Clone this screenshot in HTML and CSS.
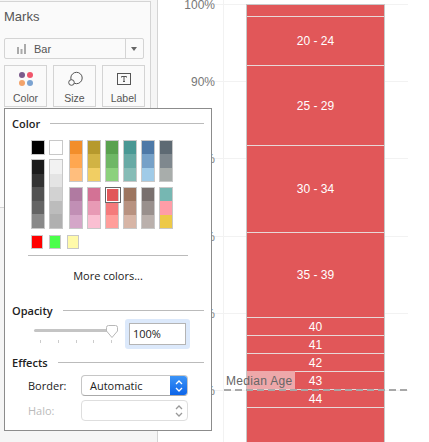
FILE: index.html
```html
<!DOCTYPE html>
<html lang="en">
<head>
    <meta charset="UTF-8">
    <title>Marks</title>
    <link rel="stylesheet" href="styles.css">
</head>
<body>

<div class="sidebar">
    <div class="marks">
        <div class="marks-title">Marks</div>
        <div class="mark-type">
            <svg class="bar-icon" width="10" height="10" viewBox="0 0 10 10"><path d="M1 3h2v7H1zM4.5 5h2v5h-2zM8 0h2v10H8z" fill="#aaa"/></svg>
            <span class="mark-name">Bar</span>
            <span class="mark-arrow"></span>
        </div>
        <div class="mark-buttons">
            <div class="mark-btn">
                <svg width="16" height="16" viewBox="0 0 16 16"><circle cx="4" cy="4" r="3" fill="#7b5b8c"/><circle cx="12" cy="4" r="3" fill="#f0566b"/><circle cx="4" cy="12" r="3" fill="#f2a36b"/><circle cx="12" cy="12" r="3" fill="#7ba3d1"/></svg>
                <span>Color</span>
            </div>
            <div class="mark-btn">
                <svg width="16" height="16" viewBox="0 0 16 16"><circle cx="9.5" cy="7" r="5.7" fill="none" stroke="#555"/><circle cx="4.5" cy="11.5" r="2.8" fill="#fafafa" stroke="#555"/></svg>
                <span>Size</span>
            </div>
            <div class="mark-btn">
                <svg width="14" height="16" viewBox="0 0 14 16"><rect x="0.5" y="2.5" width="13" height="11" fill="none" stroke="#555"/><path d="M4.5 6.5v-1h5v1M7 5.5v5M6 10.5h2" fill="none" stroke="#555"/></svg>
                <span>Label</span>
            </div>
        </div>
    </div>
</div>

<div class="chart">
    <div class="grid-line g100"></div>
    <div class="grid-line g90"></div>
    <div class="grid-line g80"></div>
    <div class="grid-line g70"></div>
    <div class="grid-line g60"></div>
    <div class="grid-line g50"></div>
    <div class="axis-line"></div>

    <div class="tick g100">100%</div>
    <div class="tick g90">90%</div>
    <div class="tick g80">80%</div>
    <div class="tick g70">70%</div>
    <div class="tick g60">60%</div>
    <div class="tick g50">50%</div>

    <div class="bar">
        <div class="seg s-top"></div>
        <div class="seg s-49">20 - 24</div>
        <div class="seg s-80">25 - 29</div>
        <div class="seg s-87">30 - 34</div>
        <div class="seg s-85">35 - 39</div>
        <div class="seg s-18">40</div>
        <div class="seg s-18">41</div>
        <div class="seg s-18">42</div>
        <div class="seg s-18">43</div>
        <div class="seg s-18">44</div>
        <div class="seg s-rest"></div>
    </div>

    <div class="median-box"></div>
    <div class="median-label">Median Age</div>
    <div class="median-line"></div>
</div>

<div class="popover">
    <div class="section-head"><span>Color</span></div>

    <div class="palette">
        <div class="palette-left">
            <div class="pair">
                <div class="swatch" style="background:#000"></div>
                <div class="swatch" style="background:#fff"></div>
            </div>
            <div class="pair">
                <div class="ramp r5">
                    <i style="background:#1b1b1b"></i><i style="background:#333"></i><i style="background:#525252"></i><i style="background:#646464"></i><i style="background:#898989"></i>
                </div>
                <div class="ramp r5">
                    <i style="background:#f2f2f2"></i><i style="background:#e4e4e4"></i><i style="background:#d2d2d2"></i><i style="background:#bcbcbc"></i><i style="background:#b0b0b0"></i>
                </div>
            </div>
        </div>
        <div class="palette-right">
            <div class="ramp r3"><i style="background:#f28e2b"></i><i style="background:#ffa750"></i><i style="background:#ffbe7d"></i></div>
            <div class="ramp r3"><i style="background:#b6992d"></i><i style="background:#d1b344"></i><i style="background:#f1ce63"></i></div>
            <div class="ramp r3"><i style="background:#59a14f"></i><i style="background:#6fb766"></i><i style="background:#8cd17d"></i></div>
            <div class="ramp r3"><i style="background:#499894"></i><i style="background:#68aaa5"></i><i style="background:#86bcb6"></i></div>
            <div class="ramp r3"><i style="background:#4e79a7"></i><i style="background:#76a1c8"></i><i style="background:#a0cbe8"></i></div>
            <div class="ramp r3"><i style="background:#5e6a73"></i><i style="background:#7f888e"></i><i style="background:#a8adab"></i></div>

            <div class="ramp r3"><i style="background:#b07aa1"></i><i style="background:#c18fb5"></i><i style="background:#d4a6c8"></i></div>
            <div class="ramp r3"><i style="background:#d37295"></i><i style="background:#e89ab5"></i><i style="background:#fabfd2"></i></div>
            <div class="ramp r3 picked"><i style="background:#e15759"></i><i style="background:#f47a7b"></i><i style="background:#ff9d9a"></i></div>
            <div class="ramp r3"><i style="background:#9d7660"></i><i style="background:#b89280"></i><i style="background:#d7b5a6"></i></div>
            <div class="ramp r3"><i style="background:#79706e"></i><i style="background:#99908d"></i><i style="background:#bab0ac"></i></div>
            <div class="ramp r3"><i style="background:#76b7b2"></i><i style="background:#ff9da7"></i><i style="background:#edc948"></i></div>
        </div>
    </div>

    <div class="recent">
        <div class="swatch small" style="background:#ff0000"></div>
        <div class="swatch small" style="background:#4bff4b"></div>
        <div class="swatch small" style="background:#fffaaa"></div>
    </div>

    <div class="divider"></div>
    <div class="more-colors">More colors...</div>

    <div class="section-head"><span>Opacity</span></div>
    <div class="opacity-row">
        <div class="slider">
            <div class="slider-track"></div>
            <svg class="slider-thumb" width="14" height="15" viewBox="0 0 14 15"><path d="M1.5 3.5q0-2 2-2h7q2 0 2 2v3.5L7 13.5 1.5 7z" fill="#fff" stroke="#b8b8b8"/></svg>
            <div class="slider-ticks"><i></i><i></i><i></i><i></i><i></i></div>
        </div>
        <div class="opacity-focus"><div class="opacity-input">100%</div></div>
    </div>

    <div class="section-head"><span>Effects</span></div>
    <div class="field">
        <label>Border:</label>
        <div class="select">
            <span>Automatic</span>
            <div class="stepper">
                <svg width="10" height="14" viewBox="0 0 10 14"><path d="M2 5l3-3 3 3M2 9l3 3 3-3" fill="none" stroke="#fff" stroke-width="1.3"/></svg>
            </div>
        </div>
    </div>
    <div class="field off">
        <label>Halo:</label>
        <div class="select">
            <span></span>
            <div class="stepper">
                <svg width="10" height="14" viewBox="0 0 10 14"><path d="M2 5l3-3 3 3M2 9l3 3 3-3" fill="none" stroke="#999" stroke-width="1.3"/></svg>
            </div>
        </div>
    </div>
</div>

</body>
</html>
```

FILE: styles.css
```css
* {
    box-sizing: border-box;
}
html, body {
    margin: 0;
    height: 442px;
    overflow: hidden;
}
body {
    position: relative;
    display: flex;
    width: 429px;
    background-color: #fff;
    font-family: "Liberation Sans", Arial, sans-serif;
    color: #333;
}

/* left panel */
.sidebar {
    width: 158px;
    height: 442px;
    flex: none;
    padding-top: 1px;
    background-color: #f5f5f5;
    border-right: 1px solid #d4d4d4;
}
.marks {
    width: 151px;
    height: 207px;
    background-color: #fafafa;
    border: 1px solid #d4d4d4;
    border-left: none;
    padding: 7px 0 0 4px;
}
.marks-title {
    font-size: 13px;
    line-height: 16px;
    color: #555;
}
.mark-type {
    display: flex;
    align-items: center;
    width: 140px;
    height: 21px;
    margin-top: 13px;
    background-color: #fafafa;
    border: 1px solid #d4d4d4;
    border-radius: 2px;
    padding-left: 11px;
    font-size: 11px;
    color: #555;
}
.mark-name {
    margin-left: 8px;
    flex: 1;
}
.mark-arrow {
    width: 18px;
    height: 19px;
    border-left: 1px solid #d4d4d4;
    position: relative;
}
.mark-arrow::after {
    content: "";
    position: absolute;
    left: 5px;
    top: 8px;
    border: 3.5px solid transparent;
    border-top: 4px solid #666;
    border-bottom: none;
}
.mark-buttons {
    display: flex;
    gap: 6px;
    margin-top: 6px;
}
.mark-btn {
    width: 43px;
    height: 42px;
    background-color: #fafafa;
    border: 1px solid #d4d4d4;
    display: flex;
    flex-direction: column;
    align-items: center;
    padding-top: 5px;
    font-size: 10.5px;
    color: #555;
    gap: 5px;
}

/* chart */
.chart {
    position: relative;
    flex: 1;
    height: 442px;
}
.grid-line {
    position: absolute;
    left: 52px;
    width: 198px;
    height: 1px;
    background-color: #f2f2f2;
}
.axis-line {
    position: absolute;
    left: 65px;
    top: 0;
    width: 1px;
    height: 442px;
    background-color: #f2f2f2;
}
.tick {
    position: absolute;
    right: 214px;
    margin-top: -6px;
    font-size: 12px;
    line-height: 14px;
    color: #777;
}
.g100 { top: 4px; }
.g90 { top: 81px; }
.g80 { top: 158px; }
.g70 { top: 236px; }
.g60 { top: 313px; }
.g50 { top: 390px; }
.bar {
    position: absolute;
    left: 88px;
    top: 4px;
    width: 139px;
    height: 438px;
    display: flex;
    flex-direction: column;
    border: 1px solid #c8c8c8;
    border-bottom: none;
}
.seg {
    display: flex;
    align-items: center;
    justify-content: center;
    background-color: #e15759;
    border-bottom: 1px solid #e8d8d8;
    color: #fff;
    font-size: 12px;
}
.s-top { height: 12px; }
.s-49 { height: 49px; }
.s-80 { height: 80px; }
.s-87 { height: 87px; }
.s-85 { height: 85px; }
.s-18 { height: 18px; }
.s-rest { flex: 1; border-bottom: none; }
.median-box {
    position: absolute;
    left: 89px;
    top: 371px;
    width: 48px;
    height: 18px;
    background-color: #eea8aa;
}
.median-label {
    position: absolute;
    left: 68px;
    top: 374px;
    font-size: 12px;
    letter-spacing: 0.3px;
    line-height: 14px;
    color: #666;
}
.median-line {
    position: absolute;
    left: 66px;
    top: 389px;
    width: 184px;
    height: 2px;
    background: repeating-linear-gradient(90deg, #a8a8a8 0, #a8a8a8 7px, transparent 7px, transparent 11px);
}

/* color popover */
.popover {
    position: absolute;
    left: 4px;
    top: 108px;
    width: 208px;
    height: 323px;
    background-color: #fff;
    border: 1px solid #8c8c8c;
    padding: 7px 7px 0 7px;
    font-family: "Open Sans", "Liberation Sans", sans-serif;
    font-size: 11px;
    color: #222;
}
.section-head {
    display: flex;
    align-items: center;
    gap: 10px;
    height: 14px;
    font-size: 11px;
    font-weight: 600;
}
.section-head::after {
    content: "";
    flex: 1;
    height: 1px;
    background-color: #bbb;
}
.palette {
    display: flex;
    gap: 6px;
    margin: 10px 0 0 19px;
}
.palette-left {
    display: flex;
    flex-direction: column;
    gap: 4px;
}
.pair {
    display: flex;
    gap: 4px;
}
.palette-right {
    display: grid;
    grid-template-columns: repeat(6, 14px);
    column-gap: 4px;
    row-gap: 5px;
    align-content: start;
}
.swatch {
    width: 14px;
    height: 15px;
    border: 1px solid #c8c8c8;
}
.swatch.small {
    width: 12px;
    height: 14px;
}
.ramp {
    width: 14px;
    display: flex;
    flex-direction: column;
    border: 1px solid #c8c8c8;
}
.ramp i {
    display: block;
    flex: 1;
}
.r3 { height: 42px; }
.r5 { height: 70px; }
.ramp.picked {
    position: relative;
}
.ramp.picked::before {
    content: "";
    position: absolute;
    left: -1px;
    top: -1px;
    width: 14px;
    height: 14px;
    border: 1px solid #666;
    box-shadow: inset 0 0 0 1px #fff;
}
.recent {
    display: flex;
    gap: 6px;
    margin: 6px 0 0 19px;
}
.divider {
    height: 1px;
    background-color: #bbb;
    margin: 6px 16px 0 16px;
}
.more-colors {
    height: 13px;
    line-height: 13px;
    margin: 13px 0 21px;
    text-align: center;
}
.opacity-row {
    display: flex;
    margin: 2px 0 5px;
    height: 31px;
}
.slider {
    position: relative;
    width: 85px;
    margin-left: 22px;
}
.slider-track {
    position: absolute;
    left: 0;
    top: 10px;
    width: 74px;
    height: 3px;
    background-color: #c4c4c4;
    border-radius: 2px;
}
.slider-thumb {
    position: absolute;
    left: 71px;
    top: 5px;
}
.slider-ticks {
    position: absolute;
    left: 6px;
    top: 21px;
    width: 72px;
    display: flex;
    justify-content: space-between;
}
.slider-ticks i {
    width: 1px;
    height: 3px;
    background-color: #ccc;
}
.opacity-focus {
    margin-left: 6px;
    width: 65px;
    height: 30px;
    padding: 4px;
    background-color: #dce9fb;
    border-radius: 3px;
}
.opacity-input {
    height: 22px;
    border: 1px solid #b4b4b4;
    background-color: #fff;
    padding-left: 3px;
    line-height: 20px;
    font-size: 11px;
}
.field {
    display: flex;
    align-items: center;
    height: 21px;
    margin-top: 4px;
    padding-left: 16px;
}
.section-head + .field {
    margin-top: 6px;
}
.field label {
    width: 53px;
}
.field.off label {
    color: #bbb;
}
.select {
    width: 107px;
    height: 21px;
    display: flex;
    align-items: center;
    justify-content: space-between;
    border: 1px solid #c6c6c6;
    border-bottom-color: #aaa;
    border-radius: 4px;
    padding-left: 8px;
    overflow: hidden;
    font-size: 11px;
}
.stepper {
    width: 17px;
    height: 21px;
    display: flex;
    align-items: center;
    justify-content: center;
    background: linear-gradient(#3f97f8, #0a62e8);
}
.field.off .select {
    border-color: #dedede;
}
.field.off .stepper {
    background: none;
}
```
